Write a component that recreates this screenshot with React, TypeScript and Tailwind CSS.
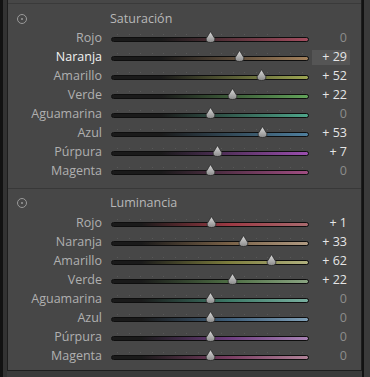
const satRows = [
  { label: "Rojo", value: 0, track: "bg-[linear-gradient(to_right,#1a1a1a_25%,#a34d5f)]" },
  { label: "Naranja", value: 29, track: "bg-[linear-gradient(to_right,#1a1a1a_25%,#a3815c)]", active: true },
  { label: "Amarillo", value: 52, track: "bg-[linear-gradient(to_right,#1a1a1a_25%,#9ca552)]" },
  { label: "Verde", value: 22, track: "bg-[linear-gradient(to_right,#1a1a1a_25%,#62a35a)]" },
  { label: "Aguamarina", value: 0, track: "bg-[linear-gradient(to_right,#1a1a1a_25%,#4ea58a)]" },
  { label: "Azul", value: 53, track: "bg-[linear-gradient(to_right,#1a1a1a_25%,#4f7f9e)]" },
  { label: "Púrpura", value: 7, track: "bg-[linear-gradient(to_right,#1a1a1a_25%,#9a4eae)]" },
  { label: "Magenta", value: 0, track: "bg-[linear-gradient(to_right,#1a1a1a_25%,#a04d82)]" },
];

const lumRows = [
  { label: "Rojo", value: 1, track: "bg-[linear-gradient(to_right,#1a1a1a_15%,#9c3a44_60%,#a86a6e)]" },
  { label: "Naranja", value: 33, track: "bg-[linear-gradient(to_right,#1a1a1a_15%,#7a6248_60%,#b09a82)]" },
  { label: "Amarillo", value: 62, track: "bg-[linear-gradient(to_right,#1a1a1a_15%,#7e7e3e_60%,#b0b07e)]" },
  { label: "Verde", value: 22, track: "bg-[linear-gradient(to_right,#1a1a1a_15%,#4e6e44_60%,#8aa482)]" },
  { label: "Aguamarina", value: 0, track: "bg-[linear-gradient(to_right,#1a1a1a_15%,#3e7a68_60%,#7ab0a0)]" },
  { label: "Azul", value: 0, track: "bg-[linear-gradient(to_right,#1a1a1a_15%,#3e5e7a_60%,#80a0b8)]" },
  { label: "Púrpura", value: 0, track: "bg-[linear-gradient(to_right,#1a1a1a_15%,#6e3e80_60%,#a882b4)]" },
  { label: "Magenta", value: 0, track: "bg-[linear-gradient(to_right,#1a1a1a_15%,#7a3e62_60%,#b08298)]" },
];

type Row = { label: string; value: number; track: string; active?: boolean };

function Thumb() {
  return (
    <svg width="11" height="12" viewBox="0 0 11 12">
      <defs>
        <linearGradient id="tg" x1="0" y1="0" x2="0" y2="1">
          <stop offset="0" stopColor="#dcdcdc" />
          <stop offset="1" stopColor="#8a8a8a" />
        </linearGradient>
      </defs>
      <path d="M5.5 0.5 L9.8 7.5 Q10.5 11.5 5.5 11.5 Q0.5 11.5 1.2 7.5 Z" fill="url(#tg)" stroke="#2a2a2a" strokeWidth="0.8" />
    </svg>
  );
}

function SliderRow({ row }: { row: Row }) {
  const pos = 50 + row.value / 2;
  return (
    <div className="flex h-[19px] items-center">
      <div className={`w-[95px] pr-[1px] text-right ${row.active ? "text-[#f2f2f2]" : "text-[#b0b0b0]"}`}>
        {row.label}
      </div>
      <div className="relative ml-[8px] h-full w-[198px]">
        <div className="absolute left-[6px] right-[6px] top-[5px] flex justify-between">
          {Array.from({ length: 17 }).map((_, i) => (
            <span key={i} className="h-[1px] w-[1px] bg-[#585858]" />
          ))}
        </div>
        <div className={`absolute left-0 right-0 top-[8px] h-[5px] rounded-full border border-[#0e0e0e] ${row.track}`} />
        <div className="absolute top-[2px] -ml-[5px]" style={{ left: `${pos}%` }}>
          <Thumb />
        </div>
      </div>
      <div
        className={`ml-[3px] flex h-[15px] w-[38px] items-center justify-end pr-[3px] ${
          row.active ? "bg-[#555555]" : ""
        } ${row.value === 0 ? "text-[#8c8c8c]" : "text-[#e6e6e6]"}`}
      >
        {row.value === 0 ? "0" : `+ ${row.value}`}
      </div>
    </div>
  );
}

function Section({ title, rows, pt }: { title: string; rows: Row[]; pt: string }) {
  return (
    <div>
      <div className={`flex h-[25px] items-start ${pt}`}>
        <div className="flex w-[103px] pl-[9px]">
          <span className="mt-[2px] flex h-[10px] w-[10px] items-center justify-center rounded-full border-[1.5px] border-[#9a9a9a]">
            <span className="h-[2px] w-[2px] rounded-full bg-[#9a9a9a]" />
          </span>
        </div>
        <span className="ml-[-1px] leading-[14px] text-[#b8b8b8]">{title}</span>
      </div>
      {rows.map((r) => (
        <SliderRow key={r.label} row={r} />
      ))}
    </div>
  );
}

export default function App() {
  return (
    <div
      className="flex h-[377px] w-[370px] bg-[#3a3a3a] text-[12.5px]"
      style={{ fontFamily: '"Open Sans", "Liberation Sans", sans-serif' }}
    >
      <div className="w-[3px] bg-[#121212]" />
      <div className="w-[4px] bg-[#333333]" />
      <div className="flex h-[371px] w-[355px] flex-col border-x border-b border-[#1e1e1e] bg-[#474747]">
        <div className="h-[3px]" />
        <div className="h-[1px] bg-[#3a3a3a]" />
        <Section title="Saturación" rows={satRows} pt="pt-[8px]" />
        <div className="mt-[7px] h-[1px] bg-[#383838]" />
        <Section title="Luminancia" rows={lumRows} pt="pt-[7px]" />
      </div>
      <div className="w-[2px] bg-[#121212]" />
      <div className="flex-1 bg-[#3a3a3a]" />
    </div>
  );
}
